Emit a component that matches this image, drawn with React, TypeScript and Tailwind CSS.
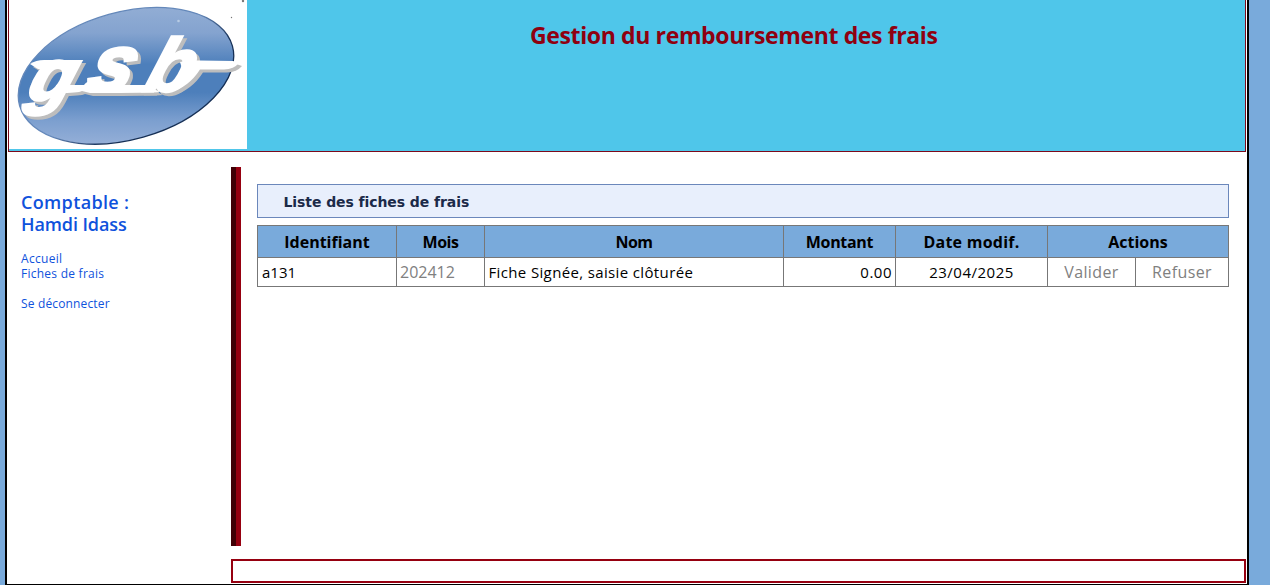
import React from "react";

const letters = [
  { char: "g", x: 25, y: 100, size: 73, weight: 3 },
  { char: "s", x: 85, y: 90, size: 78, weight: 4 },
  { char: "b", x: 142, y: 91, size: 75, weight: 3 },
];

function Lettering({ color }: { color: string }) {
  return (
    <g fill={color} stroke={color}>
      {letters.map((l) => (
        <text
          key={l.char}
          transform={`translate(${l.x} ${l.y}) skewX(-18)`}
          fontSize={l.size}
          fontWeight="700"
          fontStyle="italic"
          strokeWidth={l.weight}
          fontFamily="'Liberation Sans', Arial, sans-serif"
        >
          {l.char}
        </text>
      ))}
      <path strokeWidth="0" d="M56 85H84Q90 77 100 85H146L160 92Q155 93 90 93L82 91Q78 93 58 93Z" />
      <path strokeWidth="0" d="M180 62Q188 60 200 60.5L233 61L239 63Q234 69 224 69.5H200Q188 88 170 92Q186 76 180 62Z" />
      <path strokeWidth="0" d="M30 64Q36 60 44 60H79L75 69H38Z" />
    </g>
  );
}

function Logo() {
  return (
    <svg className="block h-[149px] w-[238px] bg-white" viewBox="9 0 238 149" role="img" aria-label="gsb">
      <defs>
        <linearGradient id="oval" gradientUnits="userSpaceOnUse" x1="126" y1="5" x2="126" y2="146" gradientTransform="rotate(15.7 126 75.8)">
          <stop offset="0" stopColor="#93aed5" />
          <stop offset="0.2" stopColor="#84a3cf" />
          <stop offset="0.42" stopColor="#4d7fbb" />
          <stop offset="0.62" stopColor="#4d7fbb" />
          <stop offset="0.82" stopColor="#7c9fcf" />
          <stop offset="1" stopColor="#96b0d8" />
        </linearGradient>
        <linearGradient id="rim" gradientUnits="userSpaceOnUse" x1="110" y1="50" x2="150" y2="140">
          <stop offset="0.3" stopColor="#6488ba" />
          <stop offset="0.7" stopColor="#152f55" />
        </linearGradient>
      </defs>
      <ellipse cx="126" cy="75.8" rx="110.5" ry="63.7" transform="rotate(-15.7 126 75.8)" fill="url(#oval)" stroke="url(#rim)" strokeWidth="1.3" />
      <g transform="translate(3 3)"><Lettering color="#bdbdbd" /></g>
      <Lettering color="#fff" />
      <circle cx="178.5" cy="21" r="1.3" fill="#b8cce4" />
      <circle cx="231.5" cy="17.5" r=".7" fill="#777" />
      <circle cx="243" cy="1" r="1.2" fill="#777" />
    </svg>
  );
}

const cell = "border border-[#777] p-0 whitespace-nowrap";

export default function App() {
  return (
    <div className="flex h-[585px] w-[1270px] overflow-hidden bg-[#79aadb] pl-[5px] font-['Open_Sans',sans-serif]">
      <div className="flex w-[1244px] flex-col border-x-2 border-b border-black bg-white pr-px pl-px">
        <header className="flex h-[152px] shrink-0 border-x border-b border-[#7c0a1c] bg-[#4fc6ea]">
          <Logo />
          <h1 className="mt-[19px] ml-[283px] text-[23px] leading-8 font-bold tracking-[-0.37px] whitespace-nowrap text-[#8f0010]">
            Gestion du remboursement des frais
          </h1>
        </header>
        <div className="flex grow">
          <nav className="w-[223px] shrink-0 pt-[39px] pl-[13px] text-[#0f52dc]">
            <h2 className="text-[18px] leading-[22px] font-semibold">
              <span className="tracking-[0.35px]">Comptable :</span>
              <br />
              <span className="tracking-[-0.1px]">Hamdi Idass</span>
            </h2>
            <ul className="mt-[16px] text-[12px] leading-[15px]">
              <li className="tracking-[0.3px]">Accueil</li>
              <li className="tracking-[0.25px]">Fiches de frais</li>
              <li className="mt-[15px] tracking-[0.15px]">Se déconnecter</li>
            </ul>
          </nav>
          <div className="flex grow flex-col pt-[15px]">
            <main className="h-[379px] border-l-[5px] border-[#400005]">
              <div className="h-full border-l-[5px] border-[#960010] pt-[17px] pr-[17px] pl-[16px]">
                <h3 className="h-[34px] border border-[#6b87bb] bg-[#e8effc] pl-[25.5px] font-['DejaVu_Sans',sans-serif] text-[14px] leading-[34px] font-bold tracking-[-0.08px] text-[#1b2a49]">
                  Liste des fiches de frais
                </h3>
                <table className="mt-[7px] w-[972px] table-fixed border-collapse text-[15px] text-black">
                  <colgroup>
                    <col className="w-[139px]" />
                    <col className="w-[88px]" />
                    <col className="w-[299px]" />
                    <col className="w-[112px]" />
                    <col className="w-[152px]" />
                    <col className="w-[88px]" />
                    <col className="w-[93px]" />
                  </colgroup>
                  <thead>
                    <tr className="h-[32px] bg-[#79aadb] text-[16px] leading-[30px]">
                      <th className={cell + " pt-px font-bold"}>Identifiant</th>
                      <th className={cell + " pt-px font-bold tracking-[-0.5px]"}>Mois</th>
                      <th className={cell + " pt-px font-bold tracking-[-0.5px]"}>Nom</th>
                      <th className={cell + " pt-px font-bold tracking-[-0.3px]"}>Montant</th>
                      <th className={cell + " pt-px font-bold tracking-[0.25px]"}>Date modif.</th>
                      <th colSpan={2} className={cell + " pt-px font-bold"}>Actions</th>
                    </tr>
                  </thead>
                  <tbody>
                    <tr className="h-[29px] leading-[28px]">
                      <td className={cell + " pl-[4px]"}>a131</td>
                      <td className={cell + " pl-[3px] text-[16px] text-[#808080]"}>202412</td>
                      <td className={cell + " pl-[3.5px] tracking-[0.36px]"}>Fiche Signée, saisie clôturée</td>
                      <td className={cell + " pr-[3px] text-right tracking-[0.5px]"}>0.00</td>
                      <td className={cell + " text-center tracking-[0.5px]"}>23/04/2025</td>
                      <td className={cell + " pt-px text-center text-[16px] leading-[27px] tracking-[0.4px] text-[#808080]"}>Valider</td>
                      <td className={cell + " pt-px text-center text-[16px] leading-[27px] tracking-[0.4px] text-[#808080]"}>Refuser</td>
                    </tr>
                  </tbody>
                </table>
              </div>
            </main>
            <footer className="mt-[13px] h-[24px] border-2 border-[#960010]" />
          </div>
        </div>
      </div>
    </div>
  );
}
